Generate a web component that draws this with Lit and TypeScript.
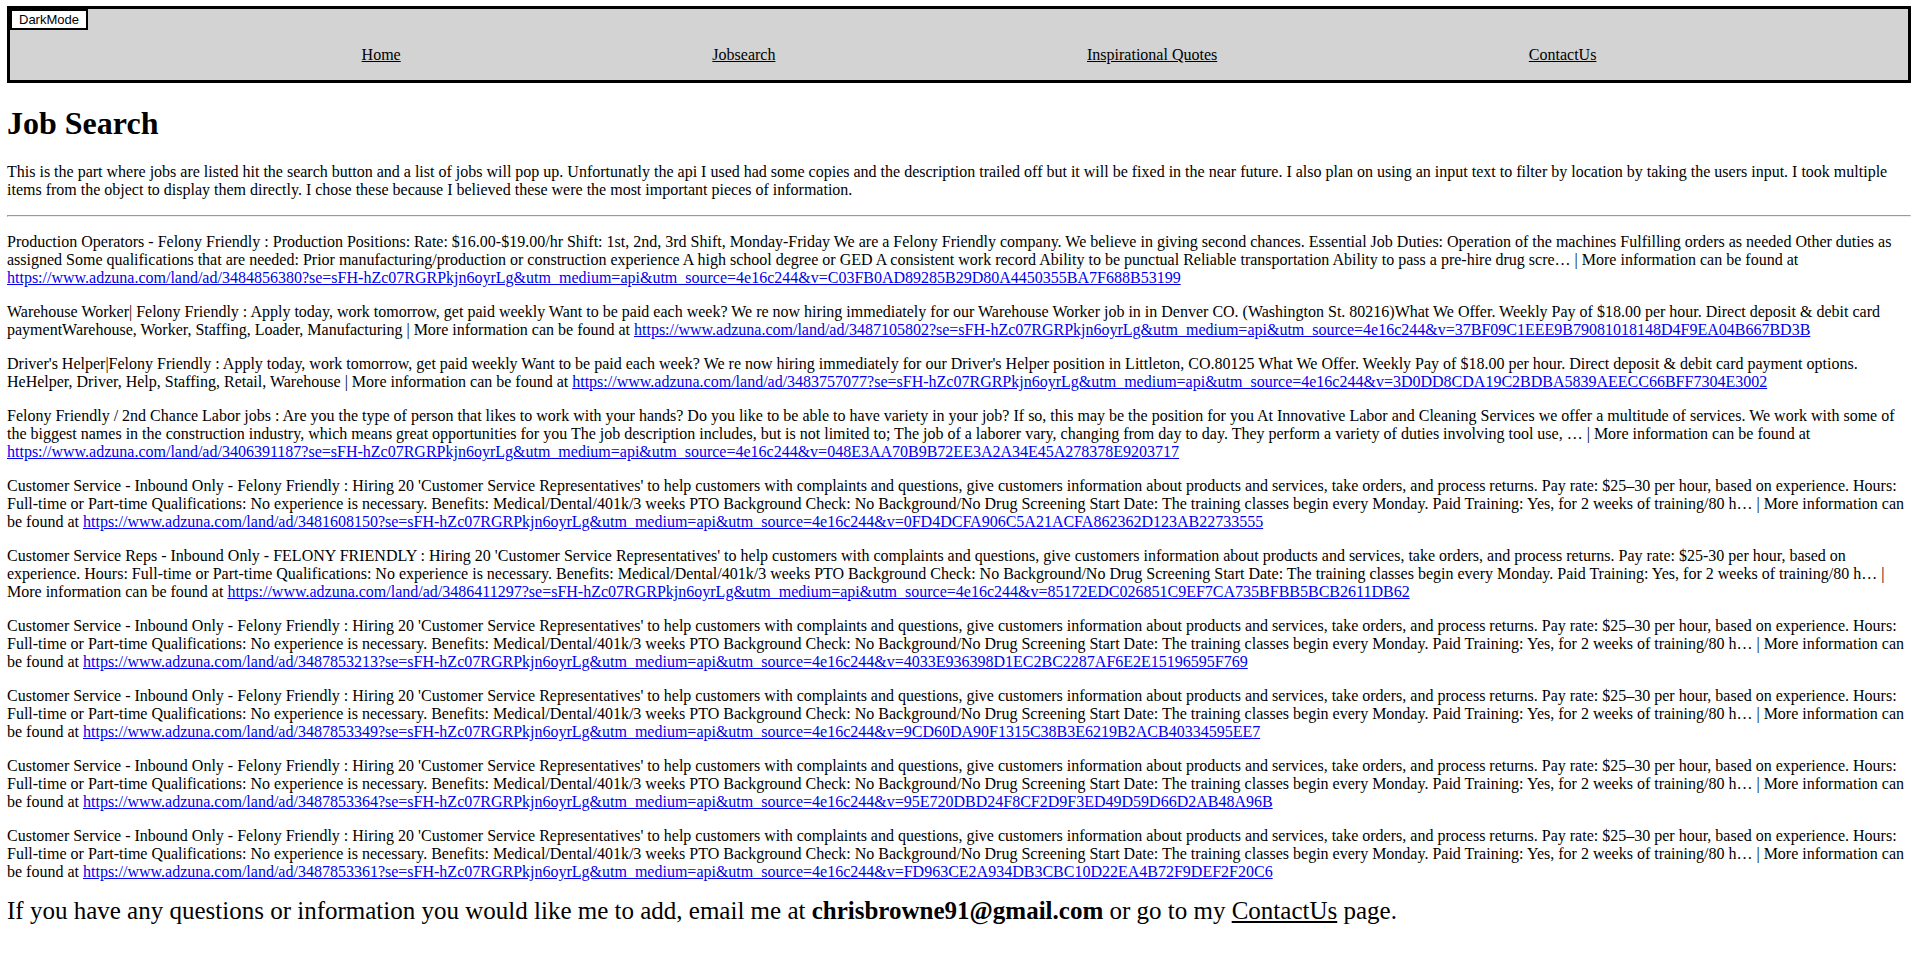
import { LitElement, html, css } from "lit";
import { customElement, state } from "lit/decorators.js";

interface Job {
  title: string;
  description: string;
  id: string;
  v: string;
}

const SERVICE_TERMS = (rate: string) =>
  `Hiring 20 'Customer Service Representatives' to help customers with complaints and questions, give customers information about products and services, take orders, and process returns. Pay rate: ${rate} per hour, based on experience. Hours: Full-time or Part-time Qualifications: No experience is necessary. Benefits: Medical/Dental/401k/3 weeks PTO Background Check: No Background/No Drug Screening Start Date: The training classes begin every Monday. Paid Training: Yes, for 2 weeks of training/80 h…`;

const inbound = (id: string, v: string): Job => ({
  title: "Customer Service - Inbound Only - Felony Friendly",
  description: SERVICE_TERMS("$25–30"),
  id,
  v,
});

const JOBS: Job[] = [
  {
    title: "Production Operators - Felony Friendly",
    description:
      "Production Positions: Rate: $16.00-$19.00/hr Shift: 1st, 2nd, 3rd Shift, Monday-Friday We are a Felony Friendly company. We believe in giving second chances. Essential Job Duties: Operation of the machines Fulfilling orders as needed Other duties as assigned Some qualifications that are needed: Prior manufacturing/production or construction experience A high school degree or GED A consistent work record Ability to be punctual Reliable transportation Ability to pass a pre-hire drug scre…",
    id: "3484856380",
    v: "C03FB0AD89285B29D80A4450355BA7F688B53199",
  },
  {
    title: "Warehouse Worker| Felony Friendly",
    description:
      "Apply today, work tomorrow, get paid weekly Want to be paid each week? We re now hiring immediately for our Warehouse Worker job in in Denver CO. (Washington St. 80216)What We Offer. Weekly Pay of $18.00 per hour. Direct deposit & debit card paymentWarehouse, Worker, Staffing, Loader, Manufacturing",
    id: "3487105802",
    v: "37BF09C1EEE9B79081018148D4F9EA04B667BD3B",
  },
  {
    title: "Driver's Helper|Felony Friendly",
    description:
      "Apply today, work tomorrow, get paid weekly Want to be paid each week? We re now hiring immediately for our Driver's Helper position in Littleton, CO.80125 What We Offer. Weekly Pay of $18.00 per hour. Direct deposit & debit card payment options. HeHelper, Driver, Help, Staffing, Retail, Warehouse",
    id: "3483757077",
    v: "3D0DD8CDA19C2BDBA5839AEECC66BFF7304E3002",
  },
  {
    title: "Felony Friendly / 2nd Chance Labor jobs",
    description:
      "Are you the type of person that likes to work with your hands? Do you like to be able to have variety in your job? If so, this may be the position for you At Innovative Labor and Cleaning Services we offer a multitude of services. We work with some of the biggest names in the construction industry, which means great opportunities for you The job description includes, but is not limited to; The job of a laborer vary, changing from day to day. They perform a variety of duties involving tool use, …",
    id: "3406391187",
    v: "048E3AA70B9B72EE3A2A34E45A278378E9203717",
  },
  inbound("3481608150", "0FD4DCFA906C5A21ACFA862362D123AB22733555"),
  {
    title: "Customer Service Reps - Inbound Only - FELONY FRIENDLY",
    description: SERVICE_TERMS("$25-30"),
    id: "3486411297",
    v: "85172EDC026851C9EF7CA735BFBB5BCB2611DB62",
  },
  inbound("3487853213", "4033E936398D1EC2BC2287AF6E2E15196595F769"),
  inbound("3487853349", "9CD60DA90F1315C38B3E6219B2ACB40334595EE7"),
  inbound("3487853364", "95E720DBD24F8CF2D9F3ED49D59D66D2AB48A96B"),
  inbound("3487853361", "FD963CE2A934DB3CBC10D22EA4B72F9DEF2F20C6"),
];

const NAV = ["Home", "Jobsearch", "Inspirational Quotes", "ContactUs"];

@customElement("app-root")
export class AppRoot extends LitElement {
  static styles = css`
    :host {
      display: block;
      padding: 6px 8px 16px 7px;
      color: #000;
      background: #fff;
      font: 16px/18px "Liberation Serif", "Times New Roman", serif;
    }
    :host([dark]) {
      color: #fff;
      background: #000;
    }
    .bar {
      border: 3px solid #000;
      background: lightgray;
    }
    .mode {
      display: block;
      padding: 1px 7px;
      border: 2px solid #000;
      border-radius: 0;
      background: #fff;
      color: #000;
      font: 13px/15px "Liberation Sans", Arial, sans-serif;
    }
    .links {
      display: flex;
      justify-content: space-evenly;
      margin: 0;
      padding: 16px 0 16px 40px;
      list-style: none;
    }
    .nav-link {
      color: #000;
    }
    .title {
      margin: 22px 0 21px;
      font-size: 32px;
      line-height: 37px;
    }
    .intro,
    .job {
      margin: 16px 0;
    }
    .rule {
      margin: 16px 0;
      border: 1px solid;
      border-color: #9a9a9a #eeeeee #eeeeee #9a9a9a;
    }
    .job-link {
      color: #0000ee;
    }
    .contact {
      margin: 16px 0 0;
      font-size: 25px;
      line-height: 28px;
    }
    .contact-link {
      color: inherit;
    }
  `;

  @state() private dark = false;

  private toggle() {
    this.dark = !this.dark;
    this.toggleAttribute("dark", this.dark);
  }

  private renderJob(job: Job) {
    const url = `https://www.adzuna.com/land/ad/${job.id}?se=sFH-hZc07RGRPkjn6oyrLg&utm_medium=api&utm_source=4e16c244&v=${job.v}`;
    return html`<p class="job">${job.title} : ${job.description} | More information can be found at <a class="job-link" href=${url}>${url}</a></p>`;
  }

  render() {
    return html`
      <header class="bar">
        <button class="mode" type="button" @click=${this.toggle}>DarkMode</button>
        <nav>
          <ul class="links">
            ${NAV.map((name) => html`<li><a class="nav-link" href="#">${name}</a></li>`)}
          </ul>
        </nav>
      </header>
      <main>
        <h1 class="title">Job Search</h1>
        <p class="intro">
          This is the part where jobs are listed hit the search button and a list of jobs will pop up. Unfortunatly the
          api I used had some copies and the description trailed off but it will be fixed in the near future. I also
          plan on using an input text to filter by location by taking the users input. I took multiple items from the
          object to display them directly. I chose these because I believed these were the most important pieces of
          information.
        </p>
        <hr class="rule" />
        <section>${JOBS.map((job) => this.renderJob(job))}</section>
      </main>
      <footer>
        <p class="contact">
          If you have any questions or information you would like me to add, email me at
          <b>chrisbrowne91@gmail.com</b> or go to my <a class="contact-link" href="#">ContactUs</a> page.
        </p>
      </footer>
    `;
  }
}
